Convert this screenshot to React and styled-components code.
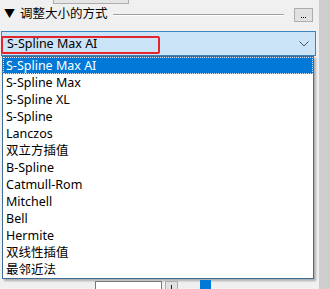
import React from "react";
import styled, { createGlobalStyle } from "styled-components";

const Global = createGlobalStyle`
  html, body { margin: 0; padding: 0; background: #f0f0f0; }
  body { width: 330px; height: 289px; overflow: hidden;
    font-family: "Noto Sans", "Noto Sans CJK SC", sans-serif; }
`;

const Page = styled.div`
  display: flex;
  width: 330px;
  height: 289px;
  overflow: hidden;
  background: #f0f0f0;
`;

const Main = styled.div`
  width: 319px;
  display: flex;
  flex-direction: column;
`;

const Strip = styled.div`
  width: 11px;
  background: #cdcdcd;
`;

const TopButtonStub = styled.div`
  margin-left: 53px;
  width: 74px;
  height: 4px;
  background: #e5e5e5;
  border: 1px solid #adadad;
  border-top: none;
`;

const Header = styled.div`
  display: flex;
  align-items: center;
  height: 14px;
  margin-top: 3px;
  padding-left: 4px;
  font-size: 12.5px;
  color: #000;
`;

const Triangle = styled.span`
  font-size: 11px;
  width: 16px;
  line-height: 14px;
`;

const HeaderText = styled.span`
  line-height: 14px;
  white-space: nowrap;
`;

const Rule = styled.div`
  flex: 1;
  margin: 1px 10px 0 5px;
  height: 0;
  border-top: 1px solid #a0a0a0;
  border-bottom: 1px solid #fff;
`;

const DotsButton = styled.div`
  position: relative;
  width: 17px;
  height: 12px;
  margin-right: 6px;
  margin-top: 2px;
  background: #e1e1e1;
  border: 1px solid #adadad;
  display: flex;
  align-items: flex-end;
  justify-content: center;
  padding-bottom: 3px;
  box-sizing: content-box;
  height: 9px;
  gap: 1px;
`;

const Dot = styled.span`
  width: 1px;
  height: 1px;
  background: #000;
`;

const ComboWrap = styled.div`
  position: relative;
  margin-top: 10px;
  margin-left: 1px;
  width: 315px;
`;

const Combo = styled.div`
  height: 23px;
  box-sizing: content-box;
  display: flex;
  align-items: center;
  justify-content: space-between;
  background: #cce4f7;
  border: 1px solid #3d83bc;
  padding: 0 6px 0 5px;
  font-size: 12.5px;
`;

const Highlight = styled.div`
  position: absolute;
  left: 0;
  top: 5px;
  width: 155px;
  height: 14px;
  border: 2px solid #e2262c;
  border-radius: 2px;
`;

const List = styled.div`
  margin-left: 2px;
  width: 310px;
  background: #fff;
  border: 1px solid #3f6d96;
  box-shadow: 2px 2px 2px rgba(0, 0, 0, 0.28);
  display: flex;
  flex-direction: column;
`;

const Item = styled.div`
  height: 17px;
  line-height: 17px;
  padding-left: 3px;
  font-size: 12.5px;
  white-space: nowrap;
  color: ${(p) => (p.$selected ? "#fff" : "#000")};
  background: ${(p) => (p.$selected ? "#0078d7" : "transparent")};
  outline: ${(p) => (p.$selected ? "1px dotted #d8e4f0" : "none")};
  outline-offset: -1px;
`;

const BottomRow = styled.div`
  display: flex;
  align-items: flex-start;
  margin-top: 2px;
  height: 8px;
`;

const TextBox = styled.div`
  margin-left: 95px;
  width: 65px;
  height: 8px;
  background: #fff;
  border: 1px solid #7a7a7a;
  border-bottom: none;
`;

const SpinButton = styled.div`
  margin-left: 3px;
  width: 13px;
  height: 8px;
  background: #e1e1e1;
  border: 1px solid #adadad;
  border-bottom: none;
  display: flex;
  justify-content: center;
  padding-top: 3px;
  box-sizing: border-box;
`;

const Tick = styled.div`
  width: 1px;
  height: 5px;
  background: #222;
`;

const Thumb = styled.div`
  margin-left: 22px;
  margin-top: -1px;
  width: 11px;
  height: 9px;
  background: #0078d7;
`;

const items = [
  "S-Spline Max AI",
  "S-Spline Max",
  "S-Spline XL",
  "S-Spline",
  "Lanczos",
  "双立方插值",
  "B-Spline",
  "Catmull-Rom",
  "Mitchell",
  "Bell",
  "Hermite",
  "双线性插值",
  "最邻近法",
];

function Chevron() {
  return (
    <svg width="10" height="6" viewBox="0 0 10 6">
      <path d="M0.5 0.5 L5 5 L9.5 0.5" fill="none" stroke="#555" strokeWidth="1" />
    </svg>
  );
}

export default function App() {
  return (
    <>
      <Global />
      <Page>
        <Main>
          <TopButtonStub />
          <Header>
            <Triangle>▼</Triangle>
            <HeaderText>调整大小的方式</HeaderText>
            <Rule />
            <DotsButton>
              <Dot />
              <Dot />
              <Dot />
            </DotsButton>
          </Header>
          <ComboWrap>
            <Combo>
              <span>S-Spline Max AI</span>
              <Chevron />
            </Combo>
            <Highlight />
          </ComboWrap>
          <List>
            {items.map((t, i) => (
              <Item key={t} $selected={i === 0}>
                {t}
              </Item>
            ))}
          </List>
          <BottomRow>
            <TextBox />
            <SpinButton>
              <Tick />
            </SpinButton>
            <Thumb />
          </BottomRow>
        </Main>
        <Strip />
      </Page>
    </>
  );
}
